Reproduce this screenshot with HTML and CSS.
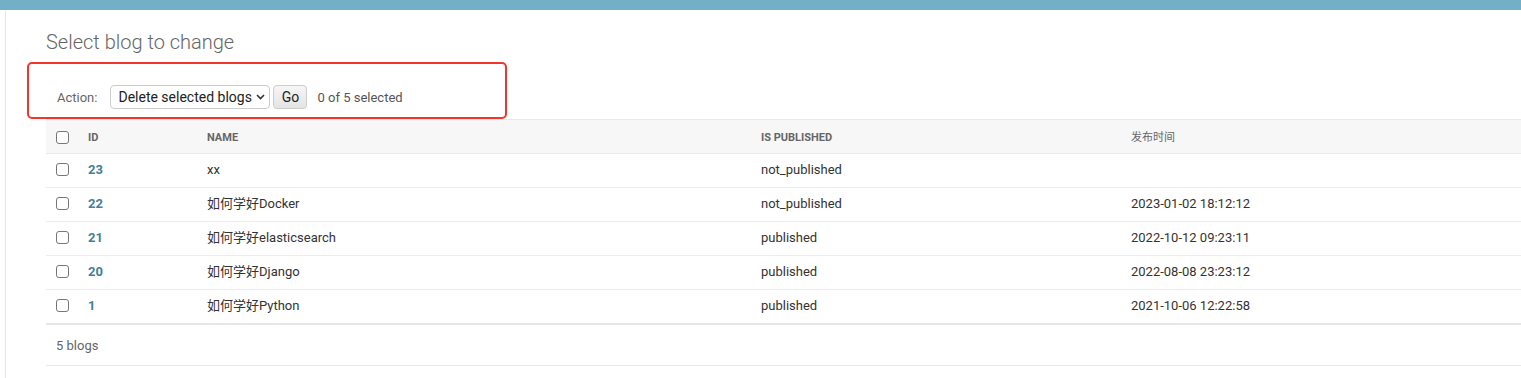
FILE: index.html
```html
<!DOCTYPE html>
<html lang="en">
<head>
    <meta charset="UTF-8">
    <meta name="viewport" content="width=device-width, initial-scale=1.0">
    <title>Select blog to change</title>
    <link rel="stylesheet" href="styles.css">
</head>
<body>
    <div class="header-bar"></div>

    <div class="main">
        <div class="nav-sidebar"></div>

        <div class="content">
            <h1>Select blog to change</h1>

            <div class="actions">
                <span class="actions-label">Action:</span>
                <span class="select">
                    Delete selected blogs
                    <svg width="9" height="6" viewBox="0 0 9 6"><path d="M1 1l3.5 3.5L8 1" fill="none" stroke="#333" stroke-width="1.6"/></svg>
                </span>
                <span class="go-btn">Go</span>
                <span class="counter">0 of 5 selected</span>
                <div class="highlight-box"></div>
            </div>

            <table class="result-list">
                <colgroup>
                    <col class="col-check">
                    <col class="col-id">
                    <col class="col-name">
                    <col class="col-pub">
                    <col>
                </colgroup>
                <thead>
                    <tr>
                        <th><span class="checkbox"></span></th>
                        <th>ID</th>
                        <th>Name</th>
                        <th>Is published</th>
                        <th class="cjk">发布时间</th>
                    </tr>
                </thead>
                <tbody>
                    <tr>
                        <td><span class="checkbox"></span></td>
                        <td><a href="#">23</a></td>
                        <td>xx</td>
                        <td>not_published</td>
                        <td></td>
                    </tr>
                    <tr>
                        <td><span class="checkbox"></span></td>
                        <td><a href="#">22</a></td>
                        <td>如何学好Docker</td>
                        <td>not_published</td>
                        <td>2023-01-02 18:12:12</td>
                    </tr>
                    <tr>
                        <td><span class="checkbox"></span></td>
                        <td><a href="#">21</a></td>
                        <td>如何学好elasticsearch</td>
                        <td>published</td>
                        <td>2022-10-12 09:23:11</td>
                    </tr>
                    <tr>
                        <td><span class="checkbox"></span></td>
                        <td><a href="#">20</a></td>
                        <td>如何学好Django</td>
                        <td>published</td>
                        <td>2022-08-08 23:23:12</td>
                    </tr>
                    <tr>
                        <td><span class="checkbox"></span></td>
                        <td><a href="#">1</a></td>
                        <td>如何学好Python</td>
                        <td>published</td>
                        <td>2021-10-06 12:22:58</td>
                    </tr>
                </tbody>
            </table>

            <p class="paginator">5 blogs</p>
        </div>
    </div>
</body>
</html>
```

FILE: styles.css
```css
* {
    margin: 0;
    padding: 0;
    box-sizing: border-box;
}

body {
    font-family: Roboto, "Noto Sans CJK SC", "Liberation Sans", sans-serif;
    font-size: 13px;
    color: #333;
    background: #fff;
    overflow: hidden;
}

.header-bar {
    height: 10px;
    background: #74afc8;
}

.main {
    display: flex;
    min-height: 368px;
}

.nav-sidebar {
    width: 6px;
    flex-shrink: 0;
    border-right: 1px solid #e6e6e6;
}

.content {
    flex: 1;
    padding: 20px 0 0 40px;
}

h1 {
    font-size: 20px;
    font-weight: 300;
    line-height: 24px;
    color: #666;
    margin-bottom: 18px;
}

.actions {
    position: relative;
    display: flex;
    align-items: center;
    padding: 13px 10px 10px 11px;
    height: 47px;
    color: #666;
}

.actions-label {
    margin-right: 13px;
}

.select {
    display: inline-flex;
    align-items: center;
    justify-content: space-between;
    width: 160px;
    height: 24px;
    padding: 0 4px 0 7px;
    border: 1px solid #ccc;
    border-radius: 4px;
    background: #fff;
    color: #222;
    font-size: 14px;
}

.go-btn {
    display: inline-flex;
    align-items: center;
    justify-content: center;
    width: 34px;
    height: 24px;
    margin-left: 3px;
    border: 1px solid #ccc;
    border-radius: 4px;
    background: linear-gradient(#f6f6f6, #e4e4e4);
    color: #222;
    font-size: 14px;
}

.counter {
    margin-left: 10px;
    color: #555;
}

/* red annotation drawn over the action bar */
.highlight-box {
    position: absolute;
    left: -19px;
    top: -10px;
    width: 480px;
    height: 57px;
    border: 2px solid #f3362b;
    border-radius: 5px;
    pointer-events: none;
}

.result-list {
    width: calc(100% + 1px);
    table-layout: fixed;
    border-collapse: collapse;
    border-top: 1px solid #e8e8e8;
}

.col-check { width: 32px; }
.col-id { width: 119px; }
.col-name { width: 554px; }
.col-pub { width: 370px; }

th, td {
    text-align: left;
    padding: 7px 10px 9px;
    line-height: 17px;
    vertical-align: middle;
    white-space: nowrap;
}

th {
    background: #f7f7f7;
    font-size: 11px;
    font-weight: 700;
    text-transform: uppercase;
    color: #666;
    border-bottom: 1px solid #eaeaea;
    padding: 9px 10px 7px;
}

th.cjk {
    font-weight: 400;
}

td {
    border-bottom: 1px solid #ececec;
}

tbody tr:last-child td {
    border-bottom: 2px solid #e6e6e6;
}

td a {
    color: #447e9b;
    font-weight: 700;
    text-decoration: none;
}

.checkbox {
    display: block;
    width: 13px;
    height: 13px;
    border: 1px solid #777;
    border-radius: 3px;
    background: #fff;
}

.paginator {
    padding: 12px 10px 11px;
    line-height: 17px;
    color: #666;
    border-bottom: 1px solid #e8e8e8;
}
```
